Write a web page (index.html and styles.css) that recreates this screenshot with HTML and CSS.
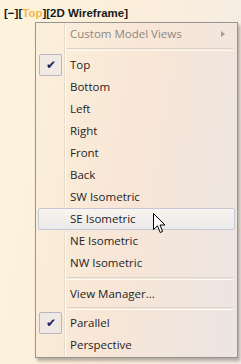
FILE: index.html
```html
<!DOCTYPE html>
<html lang="en">
<head>
    <meta charset="utf-8" />
    <title>Viewport Controls</title>
    <link rel="stylesheet" href="styles.css">
</head>
<body>
  <div id="viewport">
      <div class="view-label">[&minus;][<span class="active-view">Top</span>][2D Wireframe]</div>
      <div class="menu">
          <div class="menu-item disabled">Custom Model Views <span class="submenu-arrow"></span></div>
          <div class="separator"></div>
          <div class="menu-item checked"><span class="check">&#10004;</span>Top</div>
          <div class="menu-item">Bottom</div>
          <div class="menu-item">Left</div>
          <div class="menu-item">Right</div>
          <div class="menu-item">Front</div>
          <div class="menu-item">Back</div>
          <div class="menu-item">SW Isometric</div>
          <div class="menu-item hover">SE Isometric
              <svg class="cursor" width="13" height="21" viewBox="0 0 13 21">
                  <path d="M0.5 0.5 L0.5 16.5 L4.5 12.8 L7.2 19.5 L9.6 18.5 L7 12 L12 12 Z" fill="#fff" stroke="#000" stroke-width="1" stroke-linejoin="miter"/>
              </svg>
          </div>
          <div class="menu-item">NE Isometric</div>
          <div class="menu-item">NW Isometric</div>
          <div class="separator"></div>
          <div class="menu-item">View Manager...</div>
          <div class="separator tight"></div>
          <div class="menu-item checked"><span class="check">&#10004;</span>Parallel</div>
          <div class="menu-item">Perspective</div>
      </div>
  </div>
</body>
</html>
```

FILE: styles.css
```css
body{
    margin: 0;
    background: linear-gradient(100deg, #fdf4dd 0%, #fbeedc 50%, #f3ebe6 100%);
    font-family: "Open Sans", "Noto Sans", sans-serif;
    color: #1e1e1e;
    height: 364px;
    overflow: hidden;
}

#viewport{
    padding: 6px 0 0 4px;
}

.view-label{
    font-family: "Liberation Sans", Arial, sans-serif;
    font-weight: bold;
    font-size: 11.5px;
    line-height: 14px;
    color: #1a1a1a;
}

.active-view{
    color: #f2b84a;
}

.menu{
    margin: 2px 0 0 31px;
    width: 201px;
    border: 1px solid #979591;
    background: linear-gradient(100deg, #fbf0db 0%, #f8e6d6 45%, #ece5e3 100%);
    box-shadow: 2px 3px 3px rgba(60,50,40,0.35);
    padding-bottom: 1px;
    position: relative;
}

.menu:before{
    content: "";
    position: absolute;
    left: 28px;
    top: 0;
    bottom: 0;
    border-left: 1px solid #e6dccb;
    border-right: 1px solid #fffaf0;
}

.menu-item{
    position: relative;
    height: 22px;
    line-height: 22px;
    padding-left: 32px;
    font-size: 11.5px;
    margin: 0 2px;
}

.menu-item.disabled{
    color: #8b8882;
}

.submenu-arrow{
    position: absolute;
    right: 10px;
    top: 8px;
    border-left: 4px solid #a09c96;
    border-top: 3px solid transparent;
    border-bottom: 3px solid transparent;
}

.check{
    position: absolute;
    left: 1px;
    top: 0;
    width: 21px;
    height: 20px;
    line-height: 20px;
    text-align: center;
    border: 1px solid #b9b6c4;
    border-radius: 2px;
    background: rgba(232,230,240,0.5);
    color: #1f1f55;
    font-size: 12px;
}

.hover{
    border: 1px solid #c4c8d2;
    border-radius: 2px;
    background: linear-gradient(#f8f4f0, #ece9ea);
    height: 20px;
    line-height: 20px;
    padding-left: 31px;
}

.cursor{
    position: absolute;
    left: 114px;
    top: 4px;
}

.separator{
    height: 1px;
    margin: 3px 4px 3px 31px;
    border-top: 1px solid #ddd3c6;
    border-bottom: 1px solid #fffaf2;
}

.separator.tight{
    margin: 2px 4px 2px 31px;
}
```
